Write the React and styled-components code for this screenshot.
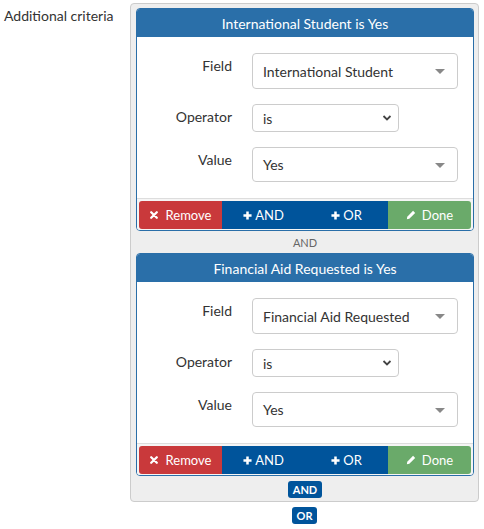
import React from "react";
import styled, { createGlobalStyle } from "styled-components";

const GlobalStyle = createGlobalStyle`
  * { box-sizing: border-box; }
  body {
    margin: 0;
    background: #fff;
    font-family: Lato, "Open Sans", sans-serif;
    color: #333;
  }
`;

const Page = styled.div`
  display: flex;
  padding: 3px 0 0 4px;
`;

const SideLabel = styled.div`
  width: 126px;
  flex: none;
  font-size: 14px;
  line-height: 20px;
  padding-top: 3px;
  color: #333;
`;

const Column = styled.div`
  display: flex;
  flex-direction: column;
  align-items: center;
  width: 349px;
`;

const Group = styled.div`
  width: 100%;
  background: #eee;
  border: 1px solid #ccc;
  border-radius: 4px;
  padding: 4px 4px 3px 5px;
  display: flex;
  flex-direction: column;
  align-items: center;
`;

const Panel = styled.div`
  width: 100%;
  background: #fff;
  border: 1px solid #2a6ea8;
  border-radius: 4px;
  overflow: hidden;
`;

const Header = styled.div`
  height: 28px;
  background: #2a6fa9;
  color: #fff;
  font-size: 14px;
  display: flex;
  align-items: center;
  justify-content: center;
`;

const Body = styled.div`
  padding: 16px 15px 16px 0;
  display: flex;
  flex-direction: column;
  gap: 15px;
`;

const Row = styled.div`
  display: flex;
  align-items: flex-start;
`;

const RowLabel = styled.div`
  width: 95px;
  margin-right: 20px;
  text-align: right;
  font-size: 14px;
  line-height: 20px;
  padding-top: 3px;
  color: #333;
`;

const Picker = styled.div`
  position: relative;
  width: ${(p) => p.$width}px;
  height: ${(p) => p.$height}px;
  border: 1px solid #ccc;
  border-radius: 4px;
  background: #fff;
  display: flex;
  align-items: center;
  padding-left: 10px;
  font-size: 14px;
  color: #333;
`;

const Caret = styled.span`
  position: absolute;
  right: 12px;
  top: 50%;
  margin-top: -2px;
  width: 0;
  height: 0;
  border-left: 5px solid transparent;
  border-right: 5px solid transparent;
  border-top: 5px solid #888;
`;

const Chevron = styled.svg`
  position: absolute;
  right: 6px;
  top: 50%;
  margin-top: -4px;
`;

const Footer = styled.div`
  background: #f5f5f5;
  border-top: 1px solid #ddd;
  padding: 2px 2px 1px;
  display: grid;
  grid-template-columns: repeat(4, 1fr);
`;

const colors = {
  red: "#c9393b",
  blue: "#00549b",
  green: "#6aaa6a",
};

const Button = styled.button`
  height: 28px;
  border: none;
  background: ${(p) => colors[p.$color]};
  color: #fff;
  font-family: inherit;
  font-size: 13px;
  display: flex;
  align-items: center;
  justify-content: center;
  gap: ${(p) => p.$gap}px;
  padding: 0;
  &:first-child { border-radius: 3px 0 0 3px; }
  &:last-child { border-radius: 0 3px 3px 0; }
`;

const Joiner = styled.div`
  height: 22px;
  display: flex;
  align-items: center;
  justify-content: center;
  font-size: 11px;
  color: #666;
`;

const Badge = styled.div`
  height: 17px;
  padding: 0 ${(p) => p.$pad}px;
  background: #00549b;
  color: #fff;
  border-radius: 3px;
  font-size: 11px;
  font-weight: 700;
  display: flex;
  align-items: center;
  margin-top: ${(p) => p.$top}px;
`;

const TimesIcon = () => (
  <svg width="8" height="8" viewBox="0 0 10 10">
    <path d="M1.5 1.5 L8.5 8.5 M8.5 1.5 L1.5 8.5" stroke="#fff" strokeWidth="2.8" strokeLinecap="round" />
  </svg>
);

const PlusIcon = () => (
  <svg width="9" height="9" viewBox="0 0 10 10">
    <path d="M5 0.5 V9.5 M0.5 5 H9.5" stroke="#fff" strokeWidth="2.8" />
  </svg>
);

const PencilIcon = () => (
  <svg width="10" height="10" viewBox="0 0 12 12">
    <path d="M8.5 1 L11 3.5 L4 10.5 L1 11 L1.5 8 Z" fill="#fff" />
  </svg>
);

const Criterion = ({ field, value }) => (
  <Panel>
    <Header>
      {field} is {value}
    </Header>
    <Body>
      <Row>
        <RowLabel>Field</RowLabel>
        <Picker $width={206} $height={36}>
          {field}
          <Caret />
        </Picker>
      </Row>
      <Row>
        <RowLabel>Operator</RowLabel>
        <Picker $width={147} $height={28}>
          is
          <Chevron width="10" height="8" viewBox="0 0 10 8">
            <path d="M1.5 2 L5 5.5 L8.5 2" stroke="#444" strokeWidth="1.8" fill="none" />
          </Chevron>
        </Picker>
      </Row>
      <Row>
        <RowLabel>Value</RowLabel>
        <Picker $width={206} $height={35}>
          {value}
          <Caret />
        </Picker>
      </Row>
    </Body>
    <Footer>
      <Button $color="red" $gap={8}>
        <TimesIcon /> Remove
      </Button>
      <Button $color="blue" $gap={3}>
        <PlusIcon /> AND
      </Button>
      <Button $color="blue" $gap={3}>
        <PlusIcon /> OR
      </Button>
      <Button $color="green" $gap={6}>
        <PencilIcon /> Done
      </Button>
    </Footer>
  </Panel>
);

export default function App() {
  return (
    <>
      <GlobalStyle />
      <Page>
        <SideLabel>Additional criteria</SideLabel>
        <Column>
          <Group>
            <Criterion field="International Student" value="Yes" />
            <Joiner>AND</Joiner>
            <Criterion field="Financial Aid Requested" value="Yes" />
            <Badge $pad={5} $top={5}>AND</Badge>
          </Group>
          <Badge $pad={5} $top={5}>OR</Badge>
        </Column>
      </Page>
    </>
  );
}
